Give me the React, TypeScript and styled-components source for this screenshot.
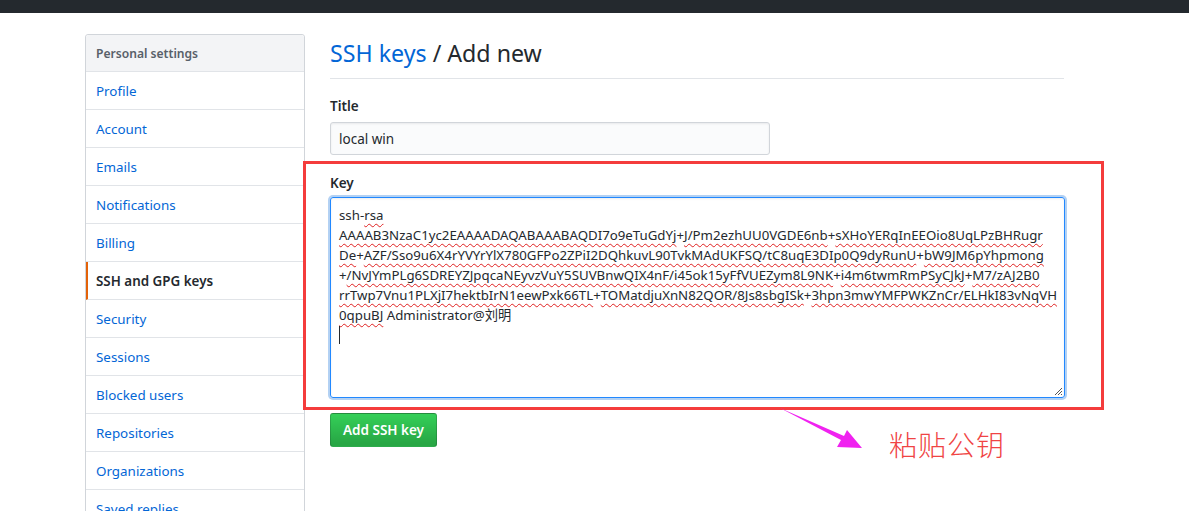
import React from "react";
import styled, { createGlobalStyle } from "styled-components";

const Global = createGlobalStyle`
  html, body { margin: 0; padding: 0; background: #fff; }
  body {
    font-family: "Noto Sans", "Noto Sans CJK SC", sans-serif;
    font-size: 13px;
    color: #24292e;
    overflow: hidden;
  }
`;

const Page = styled.div`
  width: 1189px;
  height: 511px;
  position: relative;
  overflow: hidden;
`;

const TopBar = styled.div`
  height: 13px;
  background: #24292e;
`;

const Layout = styled.div`
  display: flex;
  align-items: flex-start;
  padding-left: 85px;
  gap: 25px;
`;

const Sidebar = styled.nav`
  margin-top: 21px;
  width: 218px;
  border: 1px solid #d1d5da;
  border-radius: 3px;
  flex-shrink: 0;
`;

const MenuHeading = styled.div`
  height: 36px;
  display: flex;
  align-items: center;
  padding-left: 10px;
  background: #f3f4f6;
  color: #586069;
  font-weight: 600;
  font-size: 12.1px;
  border-bottom: 1px solid #e1e4e8;
  border-radius: 3px 3px 0 0;
`;

const MenuItem = styled.a<{ $selected?: boolean }>`
  display: flex;
  align-items: center;
  height: 37px;
  padding-left: ${(p) => (p.$selected ? "8px" : "10px")};
  border-bottom: 1px solid #e1e4e8;
  border-left: ${(p) => (p.$selected ? "2px solid #e36209" : "none")};
  color: ${(p) => (p.$selected ? "#24292e" : "#0366d6")};
  font-weight: ${(p) => (p.$selected ? 600 : 400)};
  font-size: 13.4px;
  text-decoration: none;
`;

const Main = styled.main`
  width: 734px;
  padding-top: 22px;
`;

const Subhead = styled.div`
  border-bottom: 1px solid #e1e4e8;
  padding-bottom: 7px;
`;

const Heading = styled.h2`
  margin: 0;
  font-size: 23.2px;
  font-weight: 400;
  line-height: 36px;
  color: #24292e;
`;

const HeadLink = styled.span`
  color: #0366d6;
`;

const Label = styled.label`
  display: block;
  font-weight: 600;
  font-size: 13.5px;
  line-height: 20px;
  margin-bottom: 6px;
`;

const FieldGroup = styled.div`
  margin-top: 17px;
`;

const TextInput = styled.div`
  box-sizing: border-box;
  width: 440px;
  height: 33px;
  padding: 0 8px;
  display: flex;
  align-items: center;
  background: #fafbfc;
  border: 1px solid #d1d5da;
  border-radius: 3px;
  box-shadow: inset 0 1px 2px rgba(27, 31, 35, 0.075);
  font-size: 13.5px;
`;

const Highlight = styled.div`
  box-sizing: border-box;
  width: 801px;
  margin: 6px 0 0 -27px;
  border: 3px solid #f43c3c;
  padding: 9px 0 9px 24px;
`;

const KeyLabel = styled(Label)`
  margin-bottom: 4px;
`;

const KeyArea = styled.div`
  position: relative;
  box-sizing: border-box;
  width: 735px;
  height: 201px;
  padding: 7px 8px;
  border: 1px solid #2188ff;
  border-radius: 3px;
  box-shadow: inset 0 1px 2px rgba(27, 31, 35, 0.075), 0 0 0 2px rgba(3, 102, 214, 0.3);
  font-size: 13.25px;
  line-height: 20px;
  color: #24292e;
`;

const KeyLine = styled.div`
  white-space: nowrap;
  height: 20px;
`;

const Misspelled = styled.span`
  text-decoration: underline wavy #e02020;
  text-decoration-thickness: 1px;
  text-underline-offset: 3px;
`;

const Caret = styled.span`
  display: inline-block;
  width: 1px;
  height: 18px;
  margin-top: 1px;
  background: #24292e;
`;

const Grip = styled.svg`
  position: absolute;
  right: 1px;
  bottom: 1px;
`;

const Button = styled.button`
  margin-top: 3px;
  height: 34px;
  width: 107px;
  padding: 0;
  border: 1px solid rgba(27, 31, 35, 0.2);
  border-radius: 3px;
  background: linear-gradient(-180deg, #34d058 0%, #28a745 90%);
  color: #fff;
  font-family: inherit;
  font-weight: 600;
  font-size: 13.5px;
`;

const Note = styled.div`
  position: absolute;
  left: 889px;
  top: 424px;
  font-family: "Noto Sans CJK SC", sans-serif;
  font-weight: 300;
  font-size: 28px;
  color: #f04444;
  line-height: 40px;
  letter-spacing: 1px;
`;

const Arrow = styled.svg`
  position: absolute;
  left: 776px;
  top: 406px;
`;

const menu = [
  "Profile",
  "Account",
  "Emails",
  "Notifications",
  "Billing",
  "SSH and GPG keys",
  "Security",
  "Sessions",
  "Blocked users",
  "Repositories",
  "Organizations",
  "Saved replies",
];

const keyLines = [
  "ssh-|rsa|",
  "AAAAB3NzaC1yc2EAAAADAQABAAABAQDI7o9eTuGdYj+J/Pm2ezhUU0VGDE6nb+sXHoYERqInEEOio8UqLPzBHRugr",
  "De+AZF/Sso9u6X4rYVYrYlX780GFPo2ZPiI2DQhkuvL90TvkMAdUKFSQ/tC8uqE3DIp0Q9dyRunU+bW9JM6pYhpmong",
  "+/NvJYmPLg6SDREYZJpqcaNEyvzVuY5SUVBnwQIX4nF/i45ok15yFfVUEZym8L9NK+i4m6twmRmPSyCJkJ+M7/zAJ2B0",
  "rrTwp7Vnu1PLXjI7hektbIrN1eewPxk66TL+TOMatdjuXnN82QOR/8Js8sbgISk+3hpn3mwYMFPWKZnCr/ELHkI83vNqVH",
];

function renderKeyLine(line: string) {
  if (line.includes("|")) {
    const [a, b] = line.split("|");
    return (
      <>
        {a}
        <Misspelled>{b}</Misspelled>
      </>
    );
  }
  const parts = line.split("+");
  return parts.map((p, i) => (
    <React.Fragment key={i}>
      {i > 0 && "+"}
      {p && <Misspelled>{p}</Misspelled>}
    </React.Fragment>
  ));
}

export default function App() {
  return (
    <Page>
      <Global />
      <TopBar />
      <Layout>
        <Sidebar>
          <MenuHeading>Personal settings</MenuHeading>
          {menu.map((m) => (
            <MenuItem key={m} $selected={m === "SSH and GPG keys"}>
              {m}
            </MenuItem>
          ))}
        </Sidebar>
        <Main>
          <Subhead>
            <Heading>
              <HeadLink>SSH keys</HeadLink> / Add new
            </Heading>
          </Subhead>
          <FieldGroup>
            <Label>Title</Label>
            <TextInput>local win</TextInput>
          </FieldGroup>
          <Highlight>
            <KeyLabel>Key</KeyLabel>
            <KeyArea>
              {keyLines.map((l, i) => (
                <KeyLine key={i}>{renderKeyLine(l)}</KeyLine>
              ))}
              <KeyLine>
                <Misspelled>0qpuBJ</Misspelled> Administrator@刘明
              </KeyLine>
              <KeyLine>
                <Caret />
              </KeyLine>
              <Grip width="10" height="10" viewBox="0 0 10 10">
                <path d="M9 2 L2 9 M9 5 L5 9 M9 8 L8 9" stroke="#555" strokeWidth="1" />
              </Grip>
            </KeyArea>
          </Highlight>
          <Button>Add SSH key</Button>
        </Main>
      </Layout>
      <Arrow width="90" height="50" viewBox="0 0 90 50">
        <path d="M4 2 L68 30 L71 24 L86 42 L61 41 L65 34 Z" fill="#f022f0" />
      </Arrow>
      <Note>粘贴公钥</Note>
    </Page>
  );
}
